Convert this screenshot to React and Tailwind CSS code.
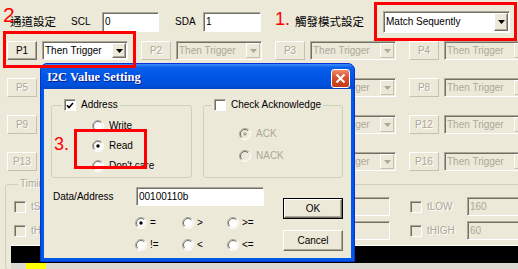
import React from "react";

const SANS = "font-['Liberation_Sans','Noto_Sans_CJK_TC',sans-serif]";

function Arrow({ disabled }) {
  return (
    <svg width="7" height="4" viewBox="0 0 7 4">
      <path d="M0 0h7L3.5 4z" fill={disabled ? "#aca899" : "#000"} />
    </svg>
  );
}

function Button({ children, disabled, isDefault, className = "" }) {
  const frame = disabled
    ? "border-t-white border-l-white border-b-[#c4c1b2] border-r-[#c4c1b2] text-[#aca899] [text-shadow:1px_1px_0_#fff]"
    : "border-t-white border-l-white border-b-[#716f64] border-r-[#716f64] shadow-[inset_-1px_-1px_0_#aca899] text-black";
  const inner = (
    <div className={`flex h-full w-full items-center justify-center border bg-[#ece9d8] ${frame}`}>
      {children}
    </div>
  );
  if (isDefault) return <div className={`border border-black ${className}`}>{inner}</div>;
  return <div className={`shrink-0 ${className}`}>{inner}</div>;
}

function Combo({ value, disabled, className = "" }) {
  return (
    <div
      className={`flex shrink-0 items-stretch gap-[2px] border border-t-[#aca899] border-l-[#aca899] border-b-white border-r-white p-[1px] shadow-[inset_1px_1px_0_#716f64] ${
        disabled ? "bg-[#ece9d8] text-[#aca899]" : "bg-white text-black"
      } ${className}`}
    >
      <span className="flex flex-1 items-center overflow-hidden whitespace-nowrap pl-[1px]">{value}</span>
      <Button disabled={disabled} className="w-[14px]">
        <Arrow disabled={disabled} />
      </Button>
    </div>
  );
}

function Field({ value, disabled, className = "" }) {
  return (
    <div
      className={`flex shrink-0 items-center overflow-hidden whitespace-nowrap border border-t-[#aca899] border-l-[#aca899] border-b-white border-r-white pl-[2px] shadow-[inset_1px_1px_0_#716f64] ${
        disabled ? "bg-[#ece9d8] text-[#aca899]" : "bg-white text-black"
      } ${className}`}
    >
      {value}
    </div>
  );
}

function Check({ checked, disabled }) {
  return (
    <div
      className={`flex h-[12px] w-[12px] shrink-0 items-center justify-center border border-t-[#aca899] border-l-[#aca899] border-b-white border-r-white shadow-[inset_1px_1px_0_#716f64] ${
        disabled ? "bg-[#ece9d8]" : "bg-white"
      }`}
    >
      {checked && (
        <svg width="8" height="7" viewBox="0 0 8 7">
          <path d="M1 3.3l2 2.2 4-4.6" stroke="#000" strokeWidth="1.6" fill="none" />
        </svg>
      )}
    </div>
  );
}

function Radio({ checked, disabled }) {
  return (
    <svg width="12" height="12" viewBox="0 0 12 12" className="shrink-0">
      <circle cx="6" cy="6" r="5.5" fill={disabled ? "#ece9d8" : "#fff"} />
      <path d="M2.1 9.9A5.5 5.5 0 0 1 9.9 2.1" stroke="#aca899" fill="none" />
      <path d="M2.8 9.2A4.5 4.5 0 0 1 9.2 2.8" stroke="#716f64" fill="none" />
      <path d="M9.9 2.1A5.5 5.5 0 0 1 2.1 9.9" stroke="#fff" fill="none" />
      <path d="M9.2 2.8A4.5 4.5 0 0 1 2.8 9.2" stroke="#f1efe2" fill="none" />
      {checked && <circle cx="6" cy="6" r="1.7" fill={disabled ? "#aca899" : "#000"} />}
    </svg>
  );
}

function RadioItem({ label, checked, disabled, className = "" }) {
  return (
    <div className={`flex h-[14px] items-center gap-[3px] ${disabled ? "text-[#aca899]" : "text-black"} ${className}`}>
      <Radio checked={checked} disabled={disabled} />
      <span>{label}</span>
    </div>
  );
}

const pRows = [
  [1, 2, 3, 4],
  [5, 6, 7, 8],
  [9, 10, 11, 12],
  [13, 14, 15, 16],
];

const timing = [
  { a: "tSU:STA", av: "60", b: "tHD:STA", bv: "60" },
  { a: "tSU:DAT", av: "10", b: "tHD:DAT", bv: "0" },
  { a: "tSU:STO", av: "60", b: "tBUF", bv: "130" },
  { a: "tLOW", av: "160", b: "tHIGH", bv: "60" },
];

function TimingCell({ label, value }) {
  return (
    <div className="flex h-[19px] w-[132px] shrink-0 items-center">
      <Check disabled />
      <span className="ml-[5px] w-[40px] text-[#aca899] [text-shadow:1px_1px_0_#fff]">{label}</span>
      <Field value={value} disabled className="h-full w-[55px]" />
    </div>
  );
}

function Dialog() {
  return (
    <div className="absolute left-[40px] top-[63px] flex h-[199px] w-[315px] flex-col rounded-t-[7px] border border-[#0831d9] bg-[#0058e6]">
      <div className="flex h-[25px] items-center rounded-t-[6px] bg-[linear-gradient(to_bottom,#3d8ef7_0%,#0a5fea_14%,#0055e5_50%,#0051dc_85%,#0046c4_100%)] pl-[6px] pr-[4px]">
        <span className="flex-1 font-['Liberation_Serif',serif] text-[12.5px] font-bold text-white [text-shadow:1px_1px_0_#0a1883]">
          I2C Value Setting
        </span>
        <div className="mt-[3px] flex h-[19px] w-[19px] items-center justify-center rounded-[3px] border border-white bg-[linear-gradient(to_bottom,#f08a6c,#d9502f_45%,#c23a18)]">
          <svg width="11" height="11" viewBox="0 0 11 11">
            <path d="M1.5 1.5l8 8M9.5 1.5l-8 8" stroke="#fff" strokeWidth="2" />
          </svg>
        </div>
      </div>

      <div className="mx-[3px] mb-[3px] flex flex-1 flex-col bg-[#ece9d8] pl-[7px] pr-[8px] pt-[10px]">
        <div className="flex gap-[11px]">
          <fieldset className="w-[141px] rounded-[3px] border border-[#d0d0bf] pb-[4px]">
            <legend className="ml-[10px] px-[2px]">
              <div className="flex h-[12px] items-center gap-[5px] whitespace-nowrap">
                <Check checked />
                <span>Address</span>
              </div>
            </legend>
            <div className="flex flex-col gap-[6px] pl-[40px] pt-[8px]">
              <RadioItem label="Write" className="gap-[5px]" />
              <RadioItem label="Read" checked className="gap-[5px]" />
              <RadioItem label="Don't care" className="gap-[5px]" />
            </div>
          </fieldset>
          <fieldset className="w-[140px] rounded-[3px] border border-[#d0d0bf]">
            <legend className="ml-[8px] px-[2px]">
              <div className="flex h-[12px] items-center gap-[5px] whitespace-nowrap">
                <Check />
                <span>Check Acknowledge</span>
              </div>
            </legend>
            <div className="flex flex-col gap-[8px] pl-[35px] pt-[16px]">
              <RadioItem label="ACK" checked disabled className="gap-[5px]" />
              <RadioItem label="NACK" disabled className="gap-[5px]" />
            </div>
          </fieldset>
        </div>

        <div className="mt-[9px] flex">
          <div className="flex flex-col">
            <div className="flex h-[19px] items-center">
              <span className="w-[85px] pl-[2px]">Data/Address</span>
              <Field value="00100110b" className="h-full w-[128px]" />
            </div>
            <div className="ml-[84px] mt-[10px] grid grid-cols-[47px_45px_40px] gap-y-[8px]">
              <RadioItem label="=" checked />
              <RadioItem label=">" />
              <RadioItem label=">=" />
              <RadioItem label="!=" />
              <RadioItem label="<" />
              <RadioItem label="<=" />
            </div>
          </div>
          <div className="ml-auto mt-[11px] flex flex-col gap-[11px]">
            <Button isDefault className="h-[21px] w-[60px]">OK</Button>
            <Button className="h-[21px] w-[60px]">Cancel</Button>
          </div>
        </div>
      </div>
    </div>
  );
}

export default function App() {
  return (
    <div className={`relative h-[269px] w-[518px] overflow-hidden bg-[#ece9d8] text-[10px] leading-[12px] text-black ${SANS}`}>
      <div className="mt-[12px] flex h-[20px] items-center">
        <span className="w-[71px] shrink-0 pl-[10px] text-[11.5px]">通道設定</span>
        <span className="w-[31px] shrink-0">SCL</span>
        <Field value="0" className="h-full w-[57px]" />
        <span className="ml-[16px] w-[28px] shrink-0">SDA</span>
        <Field value="1" className="h-full w-[58px]" />
        <span className="ml-[34px] w-[88px] shrink-0 text-[11.5px]">觸發模式設定</span>
        <Combo value="Match Sequently" className="h-[22px] w-[127px]" />
      </div>

      <div className="mt-[9px] flex flex-col gap-[18px]">
        {pRows.map((row) => (
          <div key={row[0]} className="flex h-[19px] gap-[13px] pl-[7px]">
            {row.map((n) => (
              <div key={n} className="flex shrink-0 gap-[5px]">
                <Button disabled={n !== 1} className="h-[19px] w-[30px]">
                  P{n}
                </Button>
                <Combo value="Then Trigger" disabled={n !== 1} className="h-[19px] w-[86px]" />
              </div>
            ))}
          </div>
        ))}
      </div>

      <fieldset className="ml-[5px] mt-[7px] w-[530px] rounded-[3px] border border-[#d0d0bf] px-[5px]">
        <legend className="ml-[7px] px-[2px] text-[#aca899] [text-shadow:1px_1px_0_#fff]">Timing</legend>
        <div className="flex flex-col gap-[5px] pl-[3px] pt-[7px]">
          <div className="flex">
            {timing.map((t) => (
              <TimingCell key={t.a} label={t.a} value={t.av} />
            ))}
          </div>
          <div className="flex">
            {timing.map((t) => (
              <TimingCell key={t.b} label={t.b} value={t.bv} />
            ))}
          </div>
        </div>
        <div className="mt-[5px] h-[18px] border-t border-white bg-black" />
        <div className="flex h-[6px] bg-[#dcdad0]">
          <div className="ml-[15px] w-[20px] bg-[#ffff00]" />
        </div>
      </fieldset>

      <Dialog />

      {/* annotations */}
      <div className="pointer-events-none absolute left-[3px] top-[31px] h-[37px] w-[133px] border-[3px] border-[#ff0000]" />
      <div className="pointer-events-none absolute left-[374px] top-[2px] h-[39px] w-[143px] border-[3px] border-[#ff0000]" />
      <div className="pointer-events-none absolute left-[74px] top-[129px] h-[40px] w-[73px] border-[3px] border-[#ff0000]" />
      <span className="absolute left-[3px] top-[4px] text-[21px] leading-none text-[#ff0000]">2</span>
      <span className="absolute left-[275px] top-[10px] text-[18px] leading-none text-[#ff0000]">1.</span>
      <span className="absolute left-[54px] top-[135px] text-[18px] leading-none text-[#ff0000]">3.</span>
    </div>
  );
}
